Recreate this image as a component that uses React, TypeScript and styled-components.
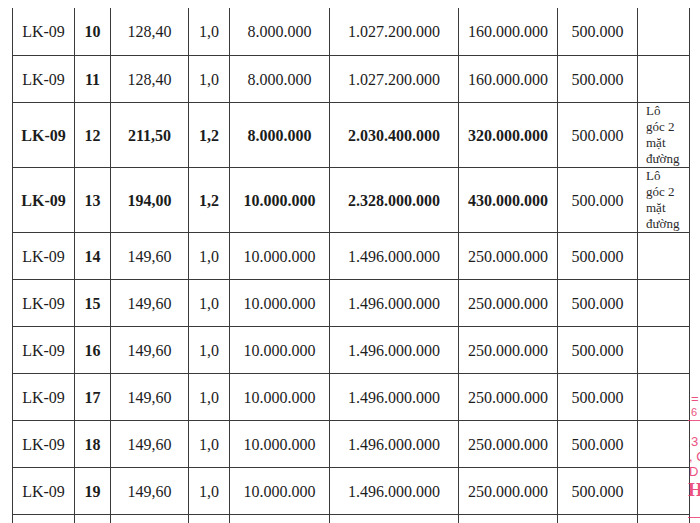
import React from 'react'
import styled, { createGlobalStyle } from 'styled-components'

const GlobalStyle = createGlobalStyle`
  html, body {
    margin: 0;
    padding: 0;
    background: #ffffff;
    overflow: hidden;
  }
  body {
    width: 700px;
    height: 523px;
  }
`

type Row = {
  block: string
  lot: string
  area: string
  coef: string
  price: string
  total: string
  deposit: string
  fee: string
  note?: string
  bold?: boolean
}

const rows: Row[] = [
  { block: 'LK-09', lot: '10', area: '128,40', coef: '1,0', price: '8.000.000', total: '1.027.200.000', deposit: '160.000.000', fee: '500.000' },
  { block: 'LK-09', lot: '11', area: '128,40', coef: '1,0', price: '8.000.000', total: '1.027.200.000', deposit: '160.000.000', fee: '500.000' },
  { block: 'LK-09', lot: '12', area: '211,50', coef: '1,2', price: '8.000.000', total: '2.030.400.000', deposit: '320.000.000', fee: '500.000', note: 'Lô góc 2 mặt đường', bold: true },
  { block: 'LK-09', lot: '13', area: '194,00', coef: '1,2', price: '10.000.000', total: '2.328.000.000', deposit: '430.000.000', fee: '500.000', note: 'Lô góc 2 mặt đường', bold: true },
  { block: 'LK-09', lot: '14', area: '149,60', coef: '1,0', price: '10.000.000', total: '1.496.000.000', deposit: '250.000.000', fee: '500.000' },
  { block: 'LK-09', lot: '15', area: '149,60', coef: '1,0', price: '10.000.000', total: '1.496.000.000', deposit: '250.000.000', fee: '500.000' },
  { block: 'LK-09', lot: '16', area: '149,60', coef: '1,0', price: '10.000.000', total: '1.496.000.000', deposit: '250.000.000', fee: '500.000' },
  { block: 'LK-09', lot: '17', area: '149,60', coef: '1,0', price: '10.000.000', total: '1.496.000.000', deposit: '250.000.000', fee: '500.000' },
  { block: 'LK-09', lot: '18', area: '149,60', coef: '1,0', price: '10.000.000', total: '1.496.000.000', deposit: '250.000.000', fee: '500.000' },
  { block: 'LK-09', lot: '19', area: '149,60', coef: '1,0', price: '10.000.000', total: '1.496.000.000', deposit: '250.000.000', fee: '500.000' },
]

const widths = [62, 36, 78, 41, 100, 129, 99, 80, 52]

export default function App(): JSX.Element {
  return (
    <>
      <GlobalStyle />
      <Page>
        <Sheet>
          <colgroup>
            {widths.map((w, i) => (
              <col key={i} style={{ width: w }} />
            ))}
          </colgroup>
          <tbody>
            {rows.map((r, i) => (
              <Line key={r.lot} $tall={!!r.note} $first={i === 0}>
                <Cell $bold={r.bold}>{r.block}</Cell>
                <Cell $bold>{r.lot}</Cell>
                <Cell $bold={r.bold}>{r.area}</Cell>
                <Cell $bold={r.bold}>{r.coef}</Cell>
                <Cell $bold={r.bold}>{r.price}</Cell>
                <Cell $bold={r.bold}>{r.total}</Cell>
                <Cell $bold={r.bold}>{r.deposit}</Cell>
                <Cell>{r.fee}</Cell>
                <Note>{r.note}</Note>
              </Line>
            ))}
            <Line $tall={false} $first={false}>
              {widths.map((_, i) => (
                <Cell key={i} />
              ))}
            </Line>
          </tbody>
        </Sheet>
        {/* red seal bleeding in from the page margin */}
        <Stamp>
          <StampMark>=</StampMark>
          <StampMark $small>6</StampMark>
          <StampRule />
          <StampMark $gap={12}>3</StampMark>
          <StampMark $shift={-2}>, C</StampMark>
          <StampMark $shift={-2}>D</StampMark>
          <StampMark $shift={-3} $heavy>H</StampMark>
          <StampRule $gap={16} />
        </Stamp>
      </Page>
    </>
  )
}

const Page = styled.div`
  position: relative;
  width: 700px;
  height: 523px;
  padding: 8px 0 0 12px;
  box-sizing: border-box;
  overflow: hidden;
  background: #fff;
`

const Sheet = styled.table`
  border-collapse: collapse;
  table-layout: fixed;
  width: 677px;
  font-family: 'Liberation Serif', 'Times New Roman', serif;
  font-size: 16px;
  color: #1c1c1c;
`

const Line = styled.tr<{ $tall: boolean; $first: boolean }>`
  height: ${(p) => (p.$tall ? '65px' : '47px')};
  td {
    border-top: ${(p) => (p.$first ? 'none' : '1px solid #3a3a3a')};
  }
`

const Cell = styled.td<{ $bold?: boolean }>`
  border-left: 1px solid #3a3a3a;
  border-right: 1px solid #3a3a3a;
  border-bottom: 1px solid #3a3a3a;
  padding: 2px 0 0;
  text-align: center;
  vertical-align: middle;
  white-space: nowrap;
  font-weight: ${(p) => (p.$bold ? 700 : 400)};
`

const Note = styled(Cell)`
  text-align: left;
  white-space: normal;
  font-size: 13px;
  line-height: 16px;
  padding: 0 10px 0 8px;
  color: #2a2a2a;
`

const Stamp = styled.div`
  position: absolute;
  top: 392px;
  left: 691px;
  width: 20px;
  display: flex;
  flex-direction: column;
  align-items: flex-start;
  gap: 2px;
  pointer-events: none;
`

const StampMark = styled.span<{ $small?: boolean; $heavy?: boolean; $shift?: number; $gap?: number }>`
  margin-left: ${(p) => p.$shift ?? 0}px;
  margin-top: ${(p) => p.$gap ?? 0}px;
  font-family: ${(p) => (p.$heavy ? "'Liberation Serif', serif" : "'Liberation Sans', sans-serif")};
  font-size: ${(p) => (p.$small ? '11px' : p.$heavy ? '19px' : '13px')};
  font-weight: ${(p) => (p.$heavy ? 700 : 400)};
  line-height: 1;
  color: #e8336b;
  opacity: 0.85;
  white-space: nowrap;
`

const StampRule = styled.div<{ $gap?: number }>`
  margin: ${(p) => p.$gap ?? 0}px 0 0 -3px;
  width: 14px;
  height: 1px;
  background: #e8336b;
  opacity: 0.8;
`
